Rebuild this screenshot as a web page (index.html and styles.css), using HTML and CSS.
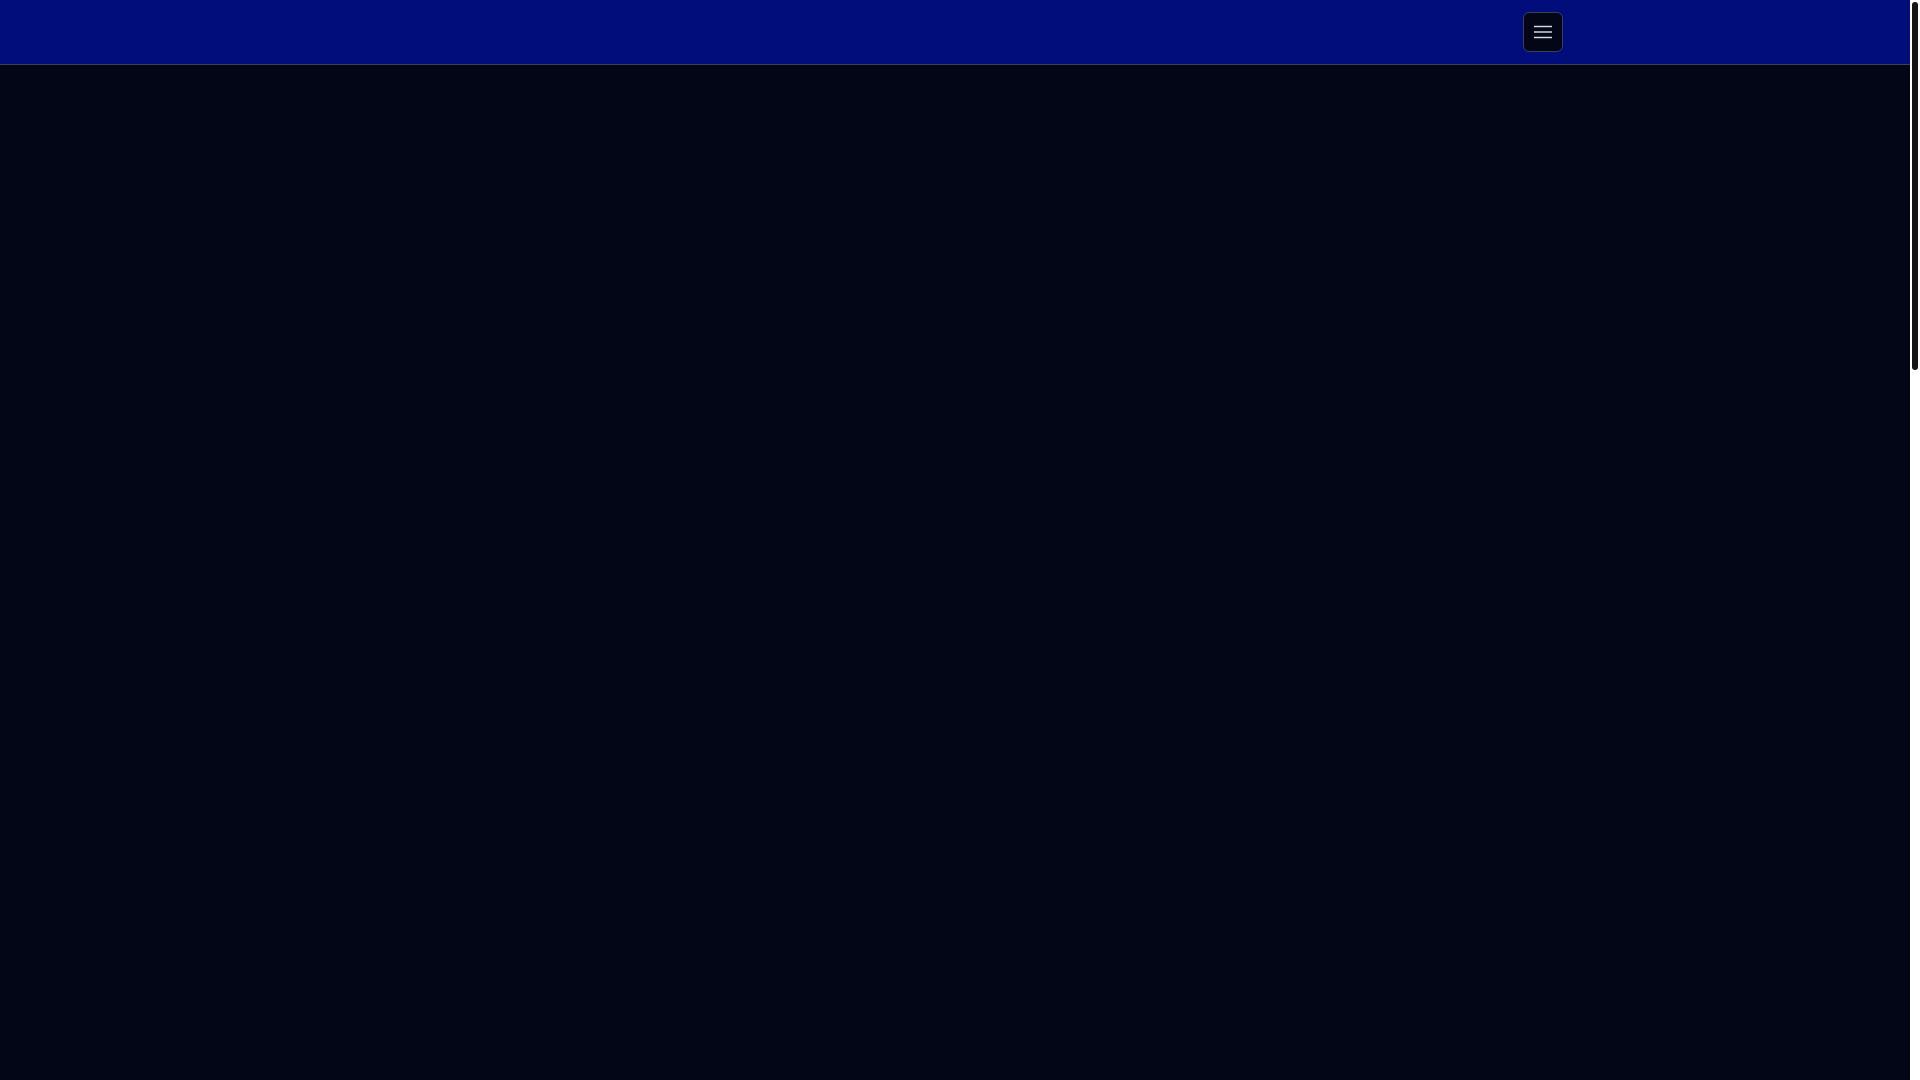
FILE: index.html
```html
<!DOCTYPE html>
<html lang="en">
<head>
<meta charset="utf-8">
<title>App</title>
<link rel="stylesheet" href="styles.css">
</head>
<body>
<div class="window">
  <div class="page">
    <header class="topbar">
      <div class="container">
        <button class="menu-btn" aria-label="Open menu">
          <svg width="18" height="18" viewBox="0 0 18 18" fill="none" stroke="#d1d5db" stroke-width="1.5">
            <path d="M0 3.5H18M0 9H18M0 14.5H18"/>
          </svg>
        </button>
      </div>
    </header>
    <main class="content"></main>
  </div>
  <div class="scrollbar" aria-hidden="true">
    <div class="scroll-thumb"></div>
  </div>
</div>
</body>
</html>
```

FILE: styles.css
```css
html, body {
  height: 100%;
  margin: 0;
  overflow: hidden;
  background: #020617;
}
body {
  font-family: "Inter", "Liberation Sans", sans-serif;
}
.window {
  display: flex;
  height: 100%;
}
.page {
  flex: 1;
  display: flex;
  flex-direction: column;
  min-width: 0;
  background: #020617;
}
.topbar {
  height: 64px;
  flex: none;
  background: #000d7b;
  border-bottom: 1px solid #374151;
}
.container {
  max-width: 1280px;
  margin: 0 auto;
  padding: 0 32px;
  height: 100%;
  display: flex;
  align-items: center;
  justify-content: flex-end;
  box-sizing: border-box;
}
.menu-btn {
  width: 40px;
  height: 40px;
  padding: 0;
  display: flex;
  align-items: center;
  justify-content: center;
  background: #020617;
  border: 1px solid #374151;
  border-radius: 6px;
  cursor: pointer;
}
.menu-btn svg {
  display: block;
}
.content {
  flex: 1;
}
.scrollbar {
  width: 10px;
  flex: none;
  background: #ffffff;
  padding: 2px;
  box-sizing: border-box;
}
.scroll-thumb {
  height: 368px;
  background: #151515;
  border-radius: 3px;
}
```
